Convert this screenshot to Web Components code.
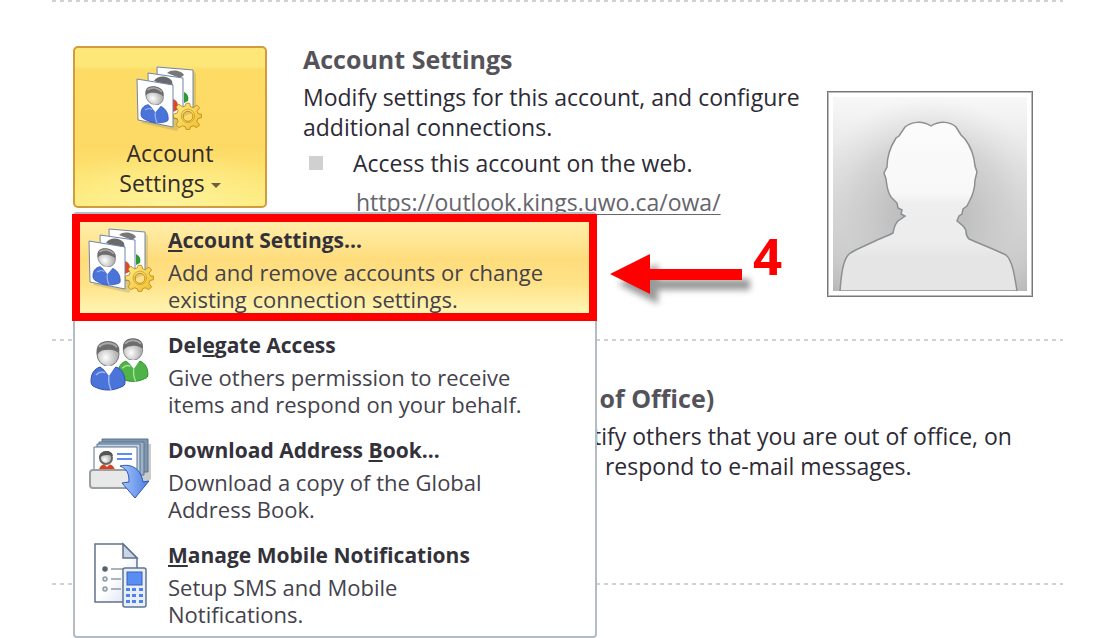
<!DOCTYPE html>
<html lang="en">
<head>
<meta charset="utf-8">
<title>Account Settings</title>
<style>
  body { margin: 0; background: #fff; color: #2d2a36; font-family: "Open Sans", "Noto Sans", sans-serif; font-size: 23px; line-height: 30px; }
</style>
</head>
<body>
<account-page></account-page>

<script>
const PERSON = (body, id) => `
  <ellipse cx="17" cy="19" rx="11" ry="12" fill="url(#face-${id})" stroke="#777" stroke-width="1"/>
  <path d="M6 20C4 11 9 6 17 6c8 0 13 5 11 12-4-3-8-4-13-3-4 0-6 1-9 5z" fill="#6d6d6d"/>
  <path d="M8 12c5-5 13-5 18 0" stroke="#a9a9a9" stroke-width="2" fill="none"/>
  <path d="M9 32l8 6 8-6c6 2 9 8 9 15 0 3-1 4-4 5-8 4-18 4-26 0-3-1-4-3-4-6 0-7 3-12 9-14z" fill="${body[0]}" stroke="${body[1]}" stroke-width="1"/>
  <path d="M11 32l7 9 6-9c-4-2-9-2-13 0z" fill="#fff"/>
  <path d="M18 41c-1 5 0 9 2 14M5 40c3-3 6-4 9-2" stroke="${body[2]}" stroke-width="1.5" fill="none"/>`;
const FACE = id => `<radialGradient id="face-${id}" cx=".4" cy=".65"><stop offset="0" stop-color="#fff"/><stop offset="1" stop-color="#b5b5b5"/></radialGradient>`;
const BLUE = ["#4b74da", "#2f50b0", "#9db7f3"], GREEN = ["#4fb347", "#2b8429", "#a8e79c"];

const ICONS = {
  accounts: `
    <defs>${FACE("a")}<linearGradient id="gear" x2="1" y2="1"><stop offset="0" stop-color="#ffee8c"/><stop offset="1" stop-color="#eebc2b"/></linearGradient></defs>
    <path d="M4 57l36 8 3-6-2-6 18-8V8l-3-4z" fill="#8a7a50" opacity=".25"/>
    <g stroke="#6f86ab" stroke-width="1" fill="#fff">
      <path d="M20 1l36 3v42l-35-5z"/>
      <path d="M30 7c4-4 14-3 17 2l-4 3z" fill="#777" stroke="none"/>
      <path d="M47 26c4 2 5 5 4 9l-4 2z" fill="#2f9a35" stroke="none"/>
      <path d="M11 7l35 5v42l-34-6z"/>
      <path d="M17 15c3-6 14-6 18 0l1 6z" fill="#6a6a6a" stroke="none"/>
      <path d="M36 33c5 2 6 6 4 11l-4 2z" fill="#e0482a" stroke="none"/>
      <path d="M0 13l36 6v42L1 54z"/>
    </g>
    <g transform="translate(4 14) skewY(8) scale(.8 .74)">${PERSON(BLUE, "a")}</g>
    <g transform="translate(5 4) scale(.9)" fill="url(#gear)" stroke="#c08a18" stroke-width="1">
      <path fill-rule="evenodd" d="M49 37h4l1 4 3 1 4-3 3 3-3 4 2 3h3v4l-4 1-1 3 3 4-3 3-4-2-3 1-1 3h-4l-1-3-3-1-4 2-3-3 2-4-1-3-4-1v-4l4-1 1-3-2-4 3-3 4 3 3-1zM51 46a5 5 0 1 0 0 11 5 5 0 0 0 0-11z"/>
      <circle cx="51" cy="51" r="7.500" fill="none" stroke="#d7a020"/>
    </g>`,
  delegate: `
    <defs>${FACE("b")}</defs>
    <g transform="translate(29 0) scale(.88)">${PERSON(GREEN, "b")}</g>
    <g transform="translate(2 2)">${PERSON(BLUE, "b")}</g>`,
  download: `
    <defs><linearGradient id="arrow" x2="1"><stop offset="0" stop-color="#a9c6fb"/><stop offset="1" stop-color="#4a7ee2"/></linearGradient>${FACE("c")}</defs>
    <path d="M17 6h45v35l-8 7z" fill="#999" opacity=".5"/>
    <g stroke="#5a7390" fill="#aebfce">
      <path d="M13 1h46v33H13z" fill="#7f97ad"/><path d="M10 4h45v33H10z" fill="#9db2c6"/><path d="M8 6h43v34H8z" fill="#c4d3e0"/><path d="M5 9h43v34H5z" fill="#fff"/>
    </g>
    <path d="M28 16h15M28 21h15" stroke="#5d8df0" stroke-width="2"/>
    <path d="M10 32c1-5 4-6 8-6 4 0 7 2 8 6z" fill="#d8401f"/><path d="M15 26l3 3 3-3z" fill="#fff"/>
    <circle cx="17" cy="20" r="6" fill="url(#face-c)" stroke="#666" stroke-width="2"/><path d="M10 20c0-8 13-10 14-2-4-1-9-2-14 2z" fill="#555"/>
    <rect x="1" y="32" width="40" height="18" rx="3" fill="#e8e8e8" stroke="#9a9f9f" stroke-width="2"/>
    <path d="M31 28c13-3 21 4 23 16l6-1-14 17-13-15 7-1c0-9-2-13-9-16z" fill="url(#arrow)" stroke="#2c57b5"/>`,
  mobile: `
    <defs><linearGradient id="sheet" x2="1" y2="1"><stop offset=".5" stop-color="#fff"/><stop offset="1" stop-color="#d2dded"/></linearGradient></defs>
    <path d="M1 1h28l14 14v44H1z" fill="url(#sheet)" stroke="#60718d" stroke-width="1.500"/>
    <path d="M29 1v14h14z" fill="#c9d6e8" stroke="#60718d" stroke-width="1.500"/>
    <g fill="#dfe6ea" stroke="#8d9da5" stroke-width="1.500"><circle cx="11" cy="26" r="2" stroke="#53626b" fill="#53626b"/><circle cx="11" cy="36" r="2"/><circle cx="11" cy="46" r="2"/></g>
    <path d="M17 26h12M17 36h10M17 46h10" stroke="#8d9da5" stroke-width="1.500"/>
    <rect x="29" y="25" width="23" height="39" rx="2" fill="#e9eef5" stroke="#5f7494" stroke-width="1.500"/>
    <rect x="33" y="29" width="15" height="13" fill="#5a8df2" stroke="#3561bd"/>
    <path d="M32 45h4v3h-4zM38 45h4v3h-4zM45 45h4v3h-4zM32 51h4v3h-4zM38 51h4v3h-4zM45 51h4v3h-4zM32 57h4v3h-4zM38 57h4v3h-4zM45 57h4v3h-4z" fill="#4c83f0"/>`
};

const define = (name, html) => customElements.define(name, class extends HTMLElement {
  constructor() {
    super();
    this.attachShadow({ mode: "open" }).innerHTML = html;
  }
});

customElements.define("outlook-icon", class extends HTMLElement {
  connectedCallback() {
    if (this.shadowRoot) return;
    const name = this.getAttribute("name");
    this.attachShadow({ mode: "open" }).innerHTML = `
      <style>:host { display: block; width: 66px; height: 66px; flex: none; } svg { display: block; overflow: visible; }</style>
      <svg width="66" height="66" viewBox="${name === "mobile" ? "-5 0 66 66" : "0 0 66 66"}" aria-hidden="true">${ICONS[name]}</svg>`;
  }
});

define("dotted-rule", `
  <style>:host { display: block; height: 2px; background: repeating-linear-gradient(90deg, #cbd4d1 0 4px, #fff 4px 8px); }</style>`);

define("ribbon-button", `
  <style>
    :host { display: block; }
    button { display: flex; flex-direction: column; align-items: center; box-sizing: border-box; width: 194px; height: 162px; padding: 18px 0 0;
      border: 2px solid #d19c3b; border-radius: 5px; font: inherit; color: #332b2b; text-align: center;
      background: radial-gradient(ellipse 70% 35% at 50% 100%, #fff39a, #fff08a00), linear-gradient(#fde778 0 18px, #fddc66 22px, #fdd965 62%, #fde371 80%, #fdea7c); }
    .label { display: block; margin-top: 6px; }
    .caret { display: inline-block; margin-left: 6px; border: 5px solid transparent; border-top-color: #6a6040; border-bottom: 0; vertical-align: middle; }
  </style>
  <button type="button" aria-haspopup="menu" aria-expanded="true">
    <outlook-icon name="accounts"></outlook-icon>
    <span class="label">Account<br>Settings<span class="caret"></span></span>
  </button>`);

define("menu-item", `
  <style>
    :host { display: block; position: relative; }
    button { display: flex; gap: 13px; box-sizing: border-box; width: 100%; height: 105px; padding: 10px 14px 6px; border: 0; background: none;
      font: inherit; font-size: 22px; line-height: 27px; color: #44424c; text-align: left; }
    :host([selected]) button { background: linear-gradient(#fff0b0, #ffe694 25%, #fedc7c 42%, #ffe287 65%, #fff3ae 90%, #fff9c4); }
    slot[name="icon"] { display: block; margin-top: 3px; }
    .title { display: block; margin-bottom: 4px; font-size: 21px; font-weight: 700; line-height: 30px; color: #33313a; }
    .desc { display: block; white-space: nowrap; }
  </style>
  <button type="button" role="menuitem">
    <slot name="icon"></slot>
    <span><span class="title"><slot name="title"></slot></span><span class="desc"><slot></slot></span></span>
  </button>
  <slot name="callout"></slot>`);

define("step-callout", `
  <style>
    :host { display: block; position: absolute; inset: -1px -2px -1px -3px; border: 8px solid #f00; pointer-events: none; }
    .pointer { position: absolute; left: 100%; top: 0; display: flex; margin-left: 21px; }
    svg { margin-top: 30px; overflow: visible; }
    .step { font-size: 51px; line-height: 66px; font-weight: 700; color: #f00; margin-left: 11px; }
  </style>
  <div class="pointer">
    <svg width="132" height="60" viewBox="0 0 132 60" aria-hidden="true">
      <defs><filter id="blur" x="-20%" y="-40%" width="140%" height="180%"><feGaussianBlur stdDeviation="3"/></filter></defs>
      <path d="M0 22L40 2v15h92v11H40v14z" fill="#777" opacity=".75" transform="translate(8 10)" filter="url(#blur)"/>
      <path d="M0 22L40 2v15h92v11H40v14z" fill="#f00"/>
    </svg>
    <span class="step">4</span>
  </div>`);

define("drop-menu", `
  <style>
    :host { display: block; box-sizing: border-box; width: 524px; padding: 1px 0; border: 2px solid #b3bbc3; border-radius: 4px; background: #fff; }
  </style>
  <div role="menu" aria-label="Account Settings"><slot></slot></div>`);

define("profile-picture", `
  <style>
    :host { display: block; box-sizing: border-box; width: 206px; height: 206px; padding: 5px; border: 1px solid #777; outline: 1px solid #bbb; outline-offset: -2px; background: #fff; flex: none; }
    svg { display: block; width: 100%; height: 100%; }
  </style>
  <svg viewBox="0 0 194 194" role="img" aria-label="Profile picture">
    <defs>
      <linearGradient id="back" x2="0" y2="1"><stop offset="0" stop-color="#f8f8f8"/><stop offset=".4" stop-color="#e0e0e0"/><stop offset=".8" stop-color="#c6c6c6"/><stop offset="1" stop-color="#b8b8b8"/></linearGradient>
      <radialGradient id="halo" cx=".5" cy=".62" r=".62"><stop offset=".3" stop-color="#c0c0c0"/><stop offset=".65" stop-color="#cfcfcf" stop-opacity=".75"/><stop offset="1" stop-color="#e0e0e0" stop-opacity="0"/></radialGradient>
      <linearGradient id="figure" x2="0" y2="1"><stop offset="0" stop-color="#fbfbfb"/><stop offset=".42" stop-color="#f8f8f8"/><stop offset=".48" stop-color="#eeeeee"/><stop offset=".7" stop-color="#ededed"/><stop offset=".8" stop-color="#e5e5e5"/></linearGradient>
    </defs>
    <path d="M0 0h194v194H0z" fill="url(#back)"/>
    <path d="M0 0h194v194H0z" fill="url(#halo)"/>
    <path d="M7 194c1-12 2-30 9-37 7-5 16-8 24-12 7-4 15-6 20-9 1-4 1-8 5-12l7-5-4-2 1-4-4-2-1-5-6-6c-4-6-4-11-5-18l-2-6 3-6c0-10 2-18 9-29l3-2 6-9c6-5 17-7 26-1 9-6 20-4 25 1l5 8 4 4c6 8 9 15 10 27l2 6-2 8c0 8-2 15-6 22l-2 4-4 3-1 5-3 2-2 5c5 4 8 5 9 10 0 3 0 5 3 8 9 4 27 11 37 16 7 6 9 24 11 36z" fill="url(#figure)" stroke="#8b9094" stroke-width="1.500"/>
  </svg>`);

define("account-page", `
  <style>
    :host { display: block; box-sizing: border-box; min-height: 100vh; padding: 0 36px 0 52px; overflow: hidden; }
    .panel { display: flex; box-sizing: border-box; padding-left: 21px; }
    .accounts { min-height: 337px; padding-top: 44px; gap: 36px; }
    .anchor { position: relative; flex: none; width: 194px; }
    drop-menu { position: absolute; left: 0; top: 166px; z-index: 1; }
    .copy { width: 504px; flex: none; margin-top: -2px; }
    h2 { margin: 0; font-size: 25px; line-height: 30px; font-weight: 700; color: #55535a; }
    p { margin: 8px 0 0; }
    ul { list-style: none; margin: 6px 0 0; padding: 0; }
    li { display: flex; align-items: center; gap: 30px; }
    li::before { content: ""; width: 14px; height: 14px; margin-left: 6px; background: #d0d0d0; }
    a { display: block; margin: 9px 0 0 53px; color: #66656b; text-underline-offset: 3px; text-decoration-thickness: 1px; }
    profile-picture { margin-top: 45px; margin-left: -16px; }
    .replies { min-height: 242px; padding-top: 42px; padding-left: 541px; }
    .replies h2, .replies p { white-space: pre; }
  </style>
  <dotted-rule></dotted-rule>
  <section class="panel accounts">
    <div class="anchor">
      <ribbon-button></ribbon-button>
      <drop-menu>
        <menu-item selected><outlook-icon slot="icon" name="accounts"></outlook-icon><span slot="title"><u>A</u>ccount Settings...</span>Add and remove accounts or change<br>existing connection settings.<step-callout slot="callout"></step-callout></menu-item>
        <menu-item><outlook-icon slot="icon" name="delegate"></outlook-icon><span slot="title">Del<u>e</u>gate Access</span>Give others permission to receive<br>items and respond on your behalf.</menu-item>
        <menu-item><outlook-icon slot="icon" name="download"></outlook-icon><span slot="title">Download Address <u>B</u>ook...</span>Download a copy of the Global<br>Address Book.</menu-item>
        <menu-item><outlook-icon slot="icon" name="mobile"></outlook-icon><span slot="title"><u>M</u>anage Mobile Notifications</span>Setup SMS and Mobile<br>Notifications.</menu-item>
      </drop-menu>
    </div>
    <div class="copy">
      <h2>Account Settings</h2>
      <p>Modify settings for this account, and configure<br>additional connections.</p>
      <ul><li>Access this account on the web.</li></ul>
      <a href="https://outlook.kings.uwo.ca/owa/">https://outlook.kings.uwo.ca/owa/</a>
    </div>
    <profile-picture></profile-picture>
  </section>
  <dotted-rule></dotted-rule>
  <section class="panel replies">
    <div>
      <h2> of Office)</h2>
      <p>tify others that you are out of office, on
  respond to e-mail messages.</p>
    </div>
  </section>
  <dotted-rule></dotted-rule>`);
</script>
</body>
</html>
